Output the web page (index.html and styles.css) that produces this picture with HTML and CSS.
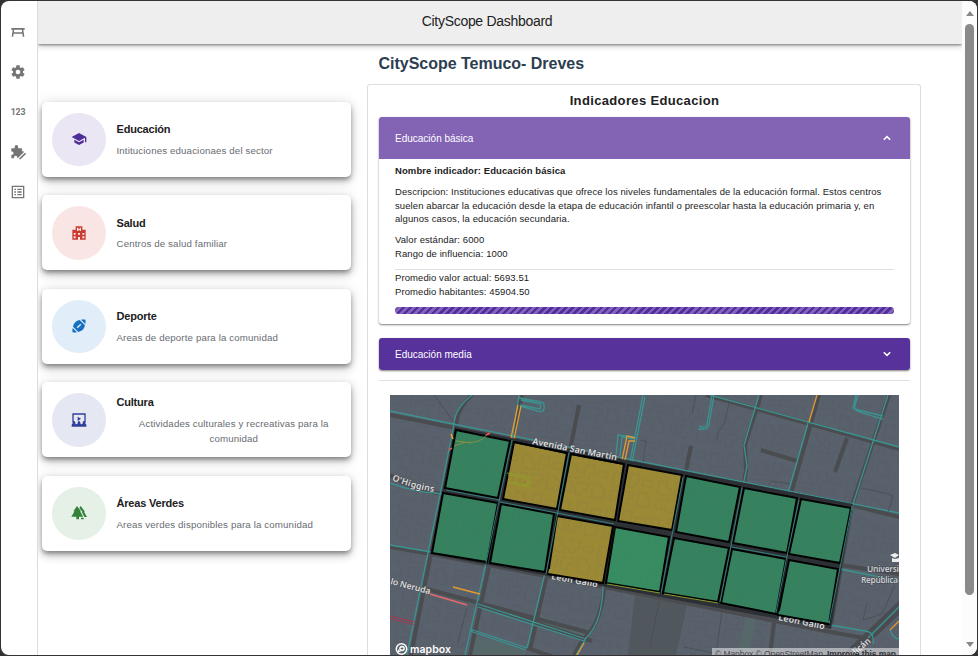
FILE: index.html
```html
<!DOCTYPE html>
<html lang="es">
<head>
<meta charset="utf-8">
<title>CityScope Dashboard</title>
<link rel="stylesheet" href="styles.css">
</head>
<body>
<div class="window">
  <nav class="rail">
    <svg class="icon" viewBox="0 0 24 24"><path d="M2 6h20v2.500h-2l1.500 10.500h-2.300l-.7-4.500h-13l-.7 4.500H2.500L4 8.500H2zM6.300 8.500l-.5 4h12.400l-.5-4z" fill-rule="evenodd"/></svg>
    <svg class="icon" viewBox="0 0 24 24"><path d="M12,15.5A3.5,3.5 0 0,1 8.5,12A3.5,3.5 0 0,1 12,8.5A3.5,3.5 0 0,1 15.5,12A3.5,3.5 0 0,1 12,15.5M19.43,12.97C19.47,12.65 19.5,12.33 19.5,12C19.5,11.67 19.47,11.34 19.43,11L21.54,9.37C21.73,9.22 21.78,8.95 21.66,8.73L19.66,5.27C19.54,5.05 19.27,4.96 19.05,5.05L16.56,6.05C16.04,5.66 15.5,5.32 14.87,5.07L14.5,2.42C14.46,2.18 14.25,2 14,2H10C9.75,2 9.54,2.18 9.5,2.42L9.13,5.07C8.5,5.32 7.96,5.66 7.44,6.05L4.95,5.05C4.73,4.96 4.46,5.05 4.34,5.27L2.34,8.73C2.21,8.95 2.27,9.22 2.46,9.37L4.57,11C4.53,11.34 4.5,11.67 4.5,12C4.5,12.33 4.53,12.65 4.57,12.97L2.46,14.63C2.27,14.78 2.21,15.05 2.34,15.27L4.34,18.73C4.46,18.95 4.73,19.03 4.95,18.95L7.44,17.94C7.96,18.34 8.5,18.68 9.13,18.93L9.5,21.58C9.54,21.82 9.75,22 10,22H14C14.25,22 14.46,21.82 14.5,21.58L14.87,18.93C15.5,18.67 16.04,18.34 16.56,17.94L19.05,18.95C19.27,19.03 19.54,18.95 19.66,18.73L21.66,15.27C21.78,15.05 21.73,14.78 21.54,14.63L19.43,12.97Z"/></svg>
    <span class="digits">123</span>
    <svg class="icon" viewBox="0 0 24 24"><path d="M2 6.500h5V4a2.600 2.600 0 0 1 5.200 0v2.500H18V11h1.500a2 2 0 0 1 1.500 1L11.500 21.500H11V20a2.500 2.500 0 0 0-5 0v1.500H2V16h1a2.300 2.300 0 0 0 0-4.600H2z"/><path d="M14 21.500L22.500 13l1.800 1.800-8.500 8.200H14z"/></svg>
    <svg class="icon" viewBox="0 0 24 24"><path d="M2.500 2.500h19v19h-19zM4.500 4.500v15h15v-15zM6.500 7h2.500v2H6.500zM11 7h6.500v2H11zM6.500 11h2.500v2H6.500zM11 11h6.500v2H11zM6.500 15h2.500v2H6.500zM11 15h6.500v2H11z" fill-rule="evenodd"/></svg>
  </nav>
  <div class="page">
    <header class="topbar">CityScope Dashboard</header>
    <main class="content">
      <section class="cards">
        <article class="card">
          <div class="badge edu"><svg class="icon" viewBox="0 0 24 24"><path d="M12,3L1,9L12,15L21,10.09V17H23V9M5,13.18V17.18L12,21L19,17.18V13.18L12,17L5,13.18Z"/></svg></div>
          <div class="info"><h3>Educación</h3><p>Intituciones eduacionaes del sector</p></div>
        </article>
        <article class="card">
          <div class="badge health"><svg class="icon" viewBox="0 0 24 24"><path d="M7 2h10v5h5v15H13.500v-4h-3v4H2V7h5zM9 4v5h2V7.500h2V9h2V4h-2v2h-2V4zM4 12v2.500h3V12zM10.500 12v2.500h3V12zM17 12v2.500h3V12zM4 17v3h3v-3zM17 17v3h3v-3z" fill-rule="evenodd"/></svg></div>
          <div class="info"><h3>Salud</h3><p>Centros de salud familiar</p></div>
        </article>
        <article class="card">
          <div class="badge sport"><svg class="icon" viewBox="0 0 24 24"><path d="M15 2.500l6.500 6.500c.6-2.500.5-5 0-6.500-1.500-.5-4-.6-6.500 0zM2.500 15c-.6 2.500-.5 5 0 6.500 1.500.5 4 .6 6.500 0zM3 13C4 7.500 7.500 4 13 3l8 8c-1 5.500-4.500 9-10 10zM8.500 14l1.500 1.500 5.500-5.500L14 8.500z" fill-rule="evenodd"/></svg></div>
          <div class="info"><h3>Deporte</h3><p>Areas de deporte para la comunidad</p></div>
        </article>
        <article class="card">
          <div class="badge culture"><svg class="icon" viewBox="0 0 24 24"><path d="M2 2h20v14h-2V4H4v12H2zM10 7l5 3.200-5 3.200zM1 22v-2.500c0-1 1-2 2-2.500a2 2 0 1 1 3 0c1 .4 1.500 1 2 1.800.5-.8 1.500-1.500 2.500-1.800a2 2 0 1 1 3 0c1 .3 2 1 2.500 1.800.5-.8 1-1.400 2-1.800a2 2 0 1 1 3 0c1 .5 2 1.500 2 2.500V22z"/></svg></div>
          <div class="info"><h3>Cultura</h3><p>Actividades culturales y recreativas para la comunidad</p></div>
        </article>
        <article class="card">
          <div class="badge green"><svg class="icon" viewBox="0 0 24 24"><path d="M9 1.500L3.500 9.500H5.300L.5 17.500H8v4h4v-4h6.200l-4.500-8H15zM14.500 1.500l-2 3L17.500 11h-1.300l4 7H24l-4.500-8H21zM15 19h4v2.500h-4z"/></svg></div>
          <div class="info"><h3>Áreas Verdes</h3><p>Areas verdes disponibles para la comunidad</p></div>
        </article>
      </section>
      <section class="detail">
        <h1>CityScope Temuco- Dreves</h1>
        <div class="panel">
          <h2>Indicadores Educacion</h2>
          <div class="accordion">
            <div class="bar open"><span>Educación básica</span><svg class="chev" viewBox="0 0 8 6"><path d="M.8 4.800L4 1.600l3.200 3.200"/></svg></div>
            <div class="body">
              <p class="name">Nombre indicador: Educación básica</p>
              <p class="desc">Descripcion: Instituciones educativas que ofrece los niveles fundamentales de la educación formal. Estos centros<br>suelen abarcar la educación desde la etapa de educación infantil o preescolar hasta la educación primaria y, en<br>algunos casos, la educación secundaria.</p>
              <p class="limits">Valor estándar: 6000<br>Rango de influencia: 1000</p>
              <p class="averages">Promedio valor actual: 5693.51<br>Promedio habitantes: 45904.50</p>
              <div class="progress"></div>
            </div>
          </div>
          <div class="accordion second"><div class="bar"><span>Educación media</span><svg class="chev" viewBox="0 0 8 6"><path d="M.8 1.200L4 4.400l3.200-3.200"/></svg></div></div>
          <div class="rule"></div>
          <svg class="map" viewBox="390 395 509 260">
            <defs>
              <pattern id="lots" width="46" height="38" patternUnits="userSpaceOnUse" patternTransform="rotate(11)">
                <path d="M3 4h8v6h5v7H3zM20 2h9v9h-4v5h-5zM33 6h10v6H33zM4 22h6v10H4zM14 21h12v6h-5v6h-7zM31 19h8v4h4v10H31z" fill="none" stroke="#4b535d" stroke-width=".6"/>
              </pattern>
              <path id="sanmartin" d="M532 444L620 461"/>
              <path id="gallo1" d="M551 579L605 589"/>
              <path id="gallo2" d="M778 620L832 631"/>
              <path id="higgins" d="M392 480Q412 489 440 493"/>
              <path id="neruda" d="M390 584L436 596"/>
              <path id="lican" d="M856 655L880 634"/>
            </defs>
            <path fill="#59616c" d="M390 395h509v260H390z"/>
            <path fill="url(#lots)" opacity=".6" d="M390 395h509v260H390z"/>
            <path fill="#50585e" d="M635 595l52 10-11 50h-48z"/>
            <path fill="#56686a" d="M471 635l55 14v6h-58zM540 615l50 18-3 7-49-18zM746 615l11 2-8 34-10-2z"/>
            <g class="street">
              <path d="M390 415L456 428L851 505L899 517M390 475Q410 489 437 493L840 565L899 574M390 547L431 554L640 594L830 632L870 639"/>
              <path d="M472 395Q457 408 456 426L411 655M522 395L512 442M579 405L570 450M516 440L470 655M574 454L530 650M634 467L605 580Q602 625 583 639L574 655M691 446L685 476M706 395L899 449M761 395L745 445L746 470L743 488M819 395L791 494M889 395L852 505L831 625M847 438L835 472M761 450L797 461M427 589L590 633M478 604L592 641M527 648L560 659M775 615L770 655"/>
              <path stroke-width="10" d="M904 603L845 659"/>
            </g>
            <g class="teal">
              <path d="M390 411L453 424L899 513M390 483Q415 492 435 493L615 526L840 569L899 581M390 545L431 552M472 395Q455 408 454 424L444 475L407 655M519 395L512 440L486 563L465 655M568 452L545 573L527 648M645 397L632 462M643 395L630 462M759 395L744 445L747 466L743 486M808 423L788 493M888 395L853 504L829 625M710 395L899 447M830 625L865 631Q875 632 873 644M906 600L868 638M890 630Q893 639 899 639M478 604L586 639M478 607L584 641M470 629L527 648M470 631L526 650M699 426L703 427Q706 428 707 424L712 395M698 429L704 429Q707 430 709 425L714 395M724 399L728 400M603 583Q603 622 586 638L576 655"/>
              <path d="M519 398L541 402Q545 402 544 409Q543 413 538 411L520 406M521 400L541 404L540 409L520 405M616 455L618 435L634 437M620 456L622 437L633 439M858 395L855 405Q854 409 858 410L883 416M856 395L853 408Q853 411 883 419"/>
            </g>
            <g class="faint"><path d="M434 395L454 422M696 395L692 414M729 404L724 424L718 432L717 440M861 488L885 493L893 496L888 512M768 485L772 481L790 484M640 440L646 441L643 462M660 597L650 647M698 605L722 611L716 655M867 602L863 620L882 614L895 585M684 647L714 653M467 608L458 642"/></g>
            <g class="orange"><path d="M518 405L511 438M521 406L514 439M817 395L809 422M635 438L627 436L622 460M635 441L629 441L625 460M453 587L480 594M584 643L577 655M899 621L890 630"/></g>
            <path class="red" d="M430 594L467 605"/><path class="crimson" d="M390 616L415 622M390 618.500L414 624.500"/>
            <path class="core" d="M455 427L853 504L831 629L430 554z"/>
            <g class="cell">
              <path d="M456 430L510 441L498 498L445 488z"/><path class="gold" d="M514 442L567 453L557 509L503 499z"/><path class="gold" d="M571 454L624 464L615 520L560 510z"/><path class="gold" d="M628 465L682 475L672 530L618 521z"/><path d="M686 476L740 487L729 542L676 532z"/><path d="M744 488L797 498L787 553L733 543z"/><path d="M801 499L851 508L840 563L789 554z"/>
              <path d="M443 493L498 503L487 562L432 553z"/><path d="M501 504L554 514L545 572L490 563z"/><path class="gold" d="M557 516L613 526L603 583L548 574z"/><path class="bright" d="M615 527L669 537L660 592L606 583z"/><path d="M674 538L729 548L718 602L663 593z"/><path d="M732 549L786 559L776 614L721 603z"/><path d="M789 560L838 569L829 624L778 615z"/>
            </g>
            <path fill="url(#lots)" opacity=".2" d="M455 428L852 506L829 627L431 554z"/>
            <g class="teal thin"><path d="M512 440L486 563M569 453L546 574M500 502L614 524M683 477L661 593M742 488L731 546L720 602M799 500L787 556L776 613M446 490L500 500M732 547L786 557M852 506L829 624"/></g>
            <path d="M607 584L660 593M664 594L718 603" fill="none" stroke="#8a9c32"/>
            <path d="M507 473L530 477L529 487L508 483M508 475L528 479L527 485L508 481M456 441L471 443" fill="none" stroke="#8fa02d" stroke-width=".9"/>
            <path d="M454 446Q464 441 475 442Q484 440 487 434" fill="none" stroke="#8a8b4a"/>
            <path d="M449 450l3-2M486 435l4-2" stroke="#f05b58" stroke-width="1.500"/><path d="M451 434l2 5" stroke="#f1a12e" stroke-width="1.500"/>
            <g class="labels">
              <text textLength="86" lengthAdjust="spacingAndGlyphs"><textPath href="#sanmartin">Avenida San Martín</textPath></text>
              <text textLength="47"><textPath href="#gallo1">León Gallo</textPath></text>
              <text textLength="47"><textPath href="#gallo2">León Gallo</textPath></text>
              <text textLength="44"><textPath href="#higgins">O'Higgins</textPath></text>
              <text textLength="41"><textPath href="#neruda">lo Neruda</textPath></text>
              <text><textPath href="#lican">licán</textPath></text>
              <text class="place" x="867" y="572" textLength="32">Universi</text><text class="place" x="861" y="583" textLength="37">República</text>
            </g>
            <path d="M549 569L602 579L601.500 583L548 574z" fill="#9b8936"/><path d="M779 611L830 621L829 624L778 615z" fill="#36825f"/>
            <g fill="none" stroke="#000" stroke-width="2"><path d="M514 442L567 453M571 454L624 464M548 574L603 583M778 615L829 624"/></g>
            <path d="M890 555l5-2 4 2-4 3zM892 558l3 1 4-1v4h-7z" fill="#eee"/>
            <circle cx="401.500" cy="649" r="5.200" fill="none" stroke="#fff" stroke-width="1.500"/><circle cx="402" cy="648.500" r="2.800" fill="#fff"/><path d="M398 652v-3l3 3z" fill="#fff"/><path d="M402 646.500l.6 1.400 1.400.6-1.400.6-.6 1.400-.6-1.400-1.400-.6 1.400-.6z" fill="#555"/>
            <text class="logo" x="410" y="652.500" textLength="41">mapbox</text>
            <path d="M712 648h187v7H712z" fill="#fff" fill-opacity=".5"/>
            <text class="credit" x="715" y="656.500" textLength="108">© Mapbox © OpenStreetMap</text><text class="credit strong" x="827" y="656.500" textLength="69">Improve this map</text>
          </svg>
        </div>
      </section>
    </main>
  </div>
  <div class="scroll"><i class="up"></i><b class="thumb"></b><i class="down"></i></div>
</div>
</body>
</html>
```
FILE: styles.css
```css
* { box-sizing: border-box; }
body, h1, h2, h3, p { margin: 0; }
body { background: #343235; height: 656px; overflow: hidden; padding: 1px; font-family: "Liberation Sans", Arial, sans-serif; color: #212121; }
.window { display: flex; height: 654px; width: 976px; background: #fff; border-radius: 8px; overflow: hidden; }
.rail { width: 37px; flex: none; border-right: 1px solid #dcdcdc; display: flex; flex-direction: column; align-items: center; gap: 24px; padding: 23px 2px 0 0; color: #757575; }
.icon { width: 16px; height: 16px; fill: currentColor; display: block; flex: none; overflow: visible; }
.digits { height: 16px; font: 700 8.800px/16px Roboto, sans-serif; letter-spacing: -.2px; }
.page { width: 924px; flex: none; display: flex; flex-direction: column; min-height: 0; overflow: hidden; }
.topbar { height: 43px; flex: none; background: #eee; text-align: center; padding-right: 26px; font-size: 14px; line-height: 41px; letter-spacing: -.3px; box-shadow: 0 1px 2px rgba(0,0,0,.4), 0 2px 6px rgba(0,0,0,.25); position: relative; width: 924px; }
.content { display: flex; flex: 1; min-height: 0; }
.cards { width: 329px; flex: none; padding: 58px 16px 0 4px; display: flex; flex-direction: column; gap: 18.700px; }
.card { height: 74.800px; flex: none; width: 309px; background: #fff; border-radius: 5px; display: flex; align-items: center; gap: 10.500px; padding: 0 0 0 10px; box-shadow: 0 3px 5px -1px rgba(0,0,0,.4), 0 5px 8px rgba(0,0,0,.16), 0 1px 14px rgba(0,0,0,.14); }
.badge { width: 54px; height: 53.500px; border-radius: 50%; flex: none; display: grid; place-items: center; }
.edu { background: #eae6f4; color: #512d98; }
.health { background: #f9e6e4; color: #cb3b32; }
.sport { background: #e1edf8; color: #1570c2; }
.culture { background: #e5e8f3; color: #303f9a; }
.green { background: #e5f0e6; color: #338239; }
.info { flex: 1; padding-bottom: 1px; }
.info h3 { font-size: 11px; line-height: 20px; font-weight: 700; letter-spacing: -.2px; }
.info p { font-size: 9.700px; line-height: 15px; margin: 3.400px 0 .6px; color: #686c72; text-align: center; width: fit-content; letter-spacing: .14px; }
.detail { width: 554px; flex: none; display: flex; flex-direction: column; }
h1 { height: 40px; flex: none; padding-left: 11.500px; font-size: 16px; line-height: 39px; color: #2c3e50; letter-spacing: -.02px; }
.panel { border: 1px solid #dedede; border-bottom: 0; border-radius: 3px 3px 0 0; flex: none; width: 554px; height: 580px; padding: 0 10px 0 11px; }
h2 { font-size: 13px; line-height: 32px; height: 32px; text-align: center; letter-spacing: .35px; }
.accordion { border-radius: 3px; box-shadow: 0 1px 2px rgba(0,0,0,.5); height: 207px; width: 531px; font-size: 9.500px; }
.bar { display: flex; align-items: center; justify-content: space-between; height: 32px; padding: 0 19.500px 0 16px; color: #fff; background: #57329b; border-radius: 3px; font-size: 10px; }
.bar.open { height: 42px; background: #8263b4; border-radius: 3px 3px 0 0; }
.chev { width: 8px; height: 6px; fill: none; stroke: #fff; stroke-width: 1.500; }
.body { padding: 5px 16px 0; letter-spacing: .09px; }
.body p { line-height: 13.500px; }
.name { font-weight: 700; }
.desc { margin-top: 7.500px; white-space: nowrap; }
.limits { margin-top: 7.500px; padding-bottom: 8.500px; border-bottom: 1px solid #e0e0e0; }
.averages { margin-top: 1.500px; }
.progress { height: 7px; margin-top: 8.500px; border-radius: 4px; background: repeating-linear-gradient(135deg, #512da0 0 2.500px, #8464b8 2.500px 5px); }
.second { height: 32px; margin-top: 14px; }
.rule { height: 1px; margin-top: 10px; background: #e0e0e0; width: 531px; }
.map { display: block; width: 509px; height: 260px; margin: 14px 0 0 11px; }
.street { fill: none; stroke: #4a4c4f; stroke-width: 4; }
.teal { fill: none; stroke: #3a9491; stroke-width: 1.300; }
.thin { stroke-width: .8; }
.faint { fill: none; stroke: #464a50; stroke-width: .7; }
.orange { fill: none; stroke: #e39a33; stroke-width: 1.300; }
.red { fill: none; stroke: #e8676b; stroke-width: 1.500; }
.crimson { fill: none; stroke: #a8364f; stroke-width: 1; }
.core { fill: #2c3035; }
.cell path { fill: #36825f; stroke: #000; stroke-width: 2; }
.cell .gold { fill: #9b8936; }
.cell .bright { fill: #378d61; }
.labels { font: 600 8.800px "Noto Sans", sans-serif; fill: #dcdcdc; stroke: #454a51; stroke-width: 1px; paint-order: stroke; }
.place { font-size: 8.500px; fill: #c8cbd0; }
.logo { font: 600 10.500px Inter, sans-serif; fill: #fff; }
.credit { font: 8.500px "Liberation Sans", sans-serif; fill: #45494e; }
.strong { font-weight: 700; fill: #303338; }
.scroll { flex: none; width: 15px; background: #fcfcfc; display: flex; flex-direction: column; align-items: center; padding: 10px 0 8px; }
.up, .down { border: 4.500px solid transparent; border-top: 0; border-bottom: 5px solid #878787; }
.down { border-bottom: 0; border-top: 5px solid #878787; margin-top: auto; }
.thumb { width: 9px; height: 571px; margin-top: 8px; border-radius: 5px; background: #8a8a8a; flex: none; }
```
